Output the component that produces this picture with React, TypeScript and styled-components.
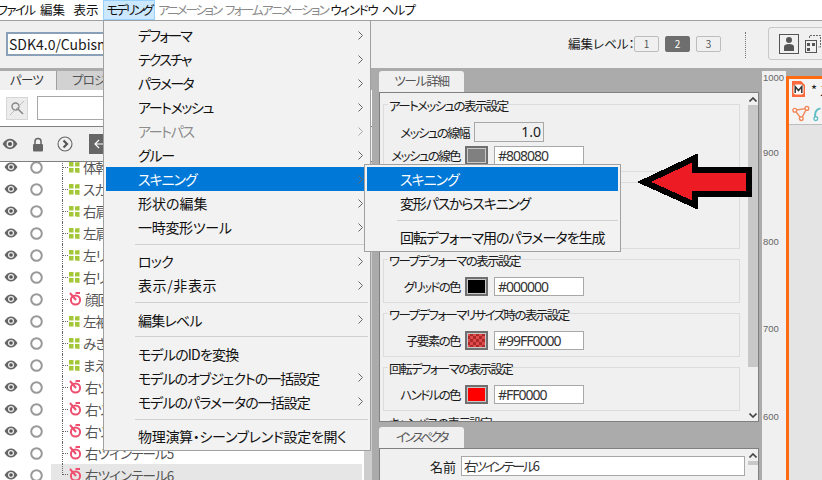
import React from 'react';
import styled, { createGlobalStyle } from 'styled-components';

const GlobalStyle = createGlobalStyle`
    html, body {
        margin: 0;
        padding: 0;
        overflow: hidden;
        background: #f0f0f0;
    }
`;

const UI_FONT = `"Noto Sans CJK JP", "Noto Sans", sans-serif`;

const Page = styled.div`
    position: relative;
    width: 822px;
    height: 480px;
    overflow: hidden;
    display: flex;
    flex-direction: column;
    font-family: ${UI_FONT};
    font-feature-settings: "palt";
    font-size: 14px;
    color: #1a1a1a;
    background: #f0f0f0;
`;

/* menu bar */
const MenuBar = styled.div`
    display: flex;
    flex: none;
    height: 20px;
    margin-left: -4px;
    background: #fff;
    border-bottom: 1px solid #a0a0a0;
`;

const MenuBarItem = styled.div<{ $width: number; $spacing: number; $active?: boolean; $disabled?: boolean }>`
    flex: none;
    width: ${(p) => p.$width}px;
    line-height: 19px;
    height: 20px;
    text-align: center;
    white-space: nowrap;
    font-size: 12.5px;
    letter-spacing: ${(p) => p.$spacing}px;
    color: ${(p) => (p.$disabled ? '#8a8a8a' : '#111')};
    background: ${(p) => (p.$active ? '#cce8ff' : 'transparent')};
    box-shadow: ${(p) => (p.$active ? 'inset 0 0 0 1px #99d1ff' : 'none')};
`;

/* tool bar */
const ToolBar = styled.div`
    display: flex;
    align-items: center;
    flex: none;
    height: 47px;
    padding-left: 6px;
    background: #f0f0f0;
`;

const ModelSelect = styled.div`
    flex: none;
    box-sizing: border-box;
    width: 240px;
    height: 24px;
    padding-left: 1px;
    line-height: 20px;
    margin-top: -2px;
    background: #fff;
    border: 2px solid #8aa0b8;
    font-size: 14px;
    white-space: nowrap;
    overflow: hidden;
`;

const LevelLabel = styled.div`
    flex: none;
    margin-left: 322px;
    width: 66px;
    font-size: 12.5px;
    white-space: nowrap;
    margin-top: -2px;
`;

const LevelButton = styled.div<{ $active?: boolean }>`
    flex: none;
    box-sizing: border-box;
    width: 25px;
    height: 16px;
    margin-right: 6px;
    margin-top: -2px;
    line-height: 14px;
    font-size: 10px;
    text-align: center;
    border: 1px solid ${(p) => (p.$active ? '#6e6e6e' : '#bdbdbd')};
    border-radius: 2px;
    color: ${(p) => (p.$active ? '#fff' : '#555')};
    background: ${(p) => (p.$active ? '#6e6e6e' : '#f0f0f0')};
`;

const DottedDivider = styled.div`
    flex: none;
    height: 26px;
    margin-left: 18px;
    margin-right: 22px;
    border-left: 1px dotted #777;
`;

const WorkspaceGroup = styled.div`
    flex: none;
    display: flex;
    align-items: center;
    gap: 5px;
    box-sizing: border-box;
    width: 70px;
    height: 33px;
    padding-left: 10px;
    margin-top: -2px;
    border: 1px solid #c8c8c8;
    border-radius: 3px;
`;

const PersonBox = styled.div`
    flex: none;
    display: flex;
    align-items: center;
    justify-content: center;
    box-sizing: border-box;
    width: 20px;
    height: 20px;
    border: 1px solid #555;
`;

/* main area */
const Main = styled.div`
    flex: 1;
    display: flex;
    min-height: 0;
    background: #ababab;
`;

const LeftPanel = styled.div`
    flex: none;
    width: 372px;
    display: flex;
    flex-direction: column;
    padding-top: 3px;
    box-sizing: border-box;
`;

const TabRow = styled.div`
    flex: none;
    display: flex;
    height: 19px;
`;

const PanelTab = styled.div<{ $active?: boolean }>`
    flex: none;
    box-sizing: border-box;
    width: ${(p) => (p.$active ? '56px' : '120px')};
    height: 19px;
    padding-left: ${(p) => (p.$active ? '10px' : '15px')};
    line-height: 18px;
    font-size: 12.5px;
    letter-spacing: -0.8px;
    color: ${(p) => (p.$active ? '#333' : '#555')};
    background: ${(p) => (p.$active ? '#f0f0f0' : '#d2d2d2')};
    border-left: ${(p) => (p.$active ? 'none' : '1px solid #a0a0a0')};
`;

const SearchRow = styled.div`
    flex: none;
    display: flex;
    align-items: center;
    gap: 9px;
    box-sizing: border-box;
    height: 37px;
    padding-left: 6px;
    background: #fff;
    border-bottom: 1px solid #808080;
`;

const SearchButton = styled.div`
    flex: none;
    display: flex;
    align-items: center;
    justify-content: center;
    box-sizing: border-box;
    width: 22px;
    height: 23px;
    background: #ececec;
    border: 1px solid #d6d6d6;
`;

const SearchInput = styled.div`
    flex: none;
    box-sizing: border-box;
    width: 320px;
    height: 24px;
    background: #fff;
    border: 1px solid #a8a8a8;
`;

const IconRow = styled.div`
    flex: none;
    display: flex;
    align-items: center;
    box-sizing: border-box;
    height: 35px;
    padding-left: 2px;
    gap: 11px;
    background: #f0f0f0;
    border-bottom: 1px solid #808080;
`;

const BackButton = styled.div`
    flex: none;
    display: flex;
    align-items: center;
    justify-content: center;
    width: 22px;
    height: 20px;
    margin-left: 5px;
    background: #666;
`;

const TreeWrap = styled.div`
    flex: 1;
    display: flex;
    min-height: 0;
    overflow: hidden;
    background: #fff;
`;

const TreeList = styled.div`
    position: relative;
    flex: 1;
    margin-top: -6px;
`;

const TreeRow = styled.div`
    display: flex;
    align-items: center;
    height: 22px;
`;

const VisibilityCell = styled.div`
    flex: none;
    display: flex;
    align-items: center;
    width: 51px;
    gap: 12px;
    padding-left: 4px;
    box-sizing: border-box;
`;

const RowBody = styled.div<{ $selected?: boolean }>`
    flex: 1;
    display: flex;
    align-items: center;
    height: 22px;
    padding-left: 11px;
    background: ${(p) => (p.$selected ? '#e6e6e6' : 'transparent')};
`;

const TreeGuide = styled.div<{ $last?: boolean }>`
    flex: none;
    width: 7px;
    height: ${(p) => (p.$last ? '11px' : '22px')};
    align-self: flex-start;
    box-sizing: border-box;
    border-left: 1px dotted #666;
    position: relative;
    &::after {
        content: '';
        position: absolute;
        left: 0;
        top: ${(p) => (p.$last ? '10px' : '11px')};
        width: 5px;
        border-top: 1px dotted #666;
    }
`;

const TreeLabel = styled.div`
    margin-left: 3px;
    white-space: nowrap;
    font-size: 13.5px;
    letter-spacing: -0.9px;
    color: #555;
    line-height: 22px;
`;

const TreeScroll = styled.div`
    flex: none;
    width: 8px;
    margin-left: 2px;
    background: #cdcdcd;
`;

/* centre column */
const CenterColumn = styled.div`
    flex: none;
    width: 390px;
    box-sizing: border-box;
    padding: 3px 3px 0 7px;
    display: flex;
    flex-direction: column;
`;

const DockTab = styled.div<{ $spacing: number }>`
    flex: none;
    box-sizing: border-box;
    width: 85px;
    height: 21px;
    line-height: 20px;
    font-size: 12.5px;
    letter-spacing: ${(p) => p.$spacing}px;
    text-align: center;
    color: #555;
    background: #f0f0f0;
    border-radius: 3px 3px 0 0;
`;

const DockPanel = styled.div<{ $height: number }>`
    flex: none;
    display: flex;
    box-sizing: border-box;
    height: ${(p) => p.$height}px;
    margin-bottom: 5px;
    overflow: hidden;
    background: #f0f0f0;
    border: 1px solid #808080;
`;

const PanelBody = styled.div`
    flex: 1;
    min-width: 0;
    display: flex;
    flex-direction: column;
    gap: 10px;
    padding: 11px 8px 0 3px;
`;

const Section = styled.div<{ $minHeight?: number }>`
    flex: none;
    box-sizing: border-box;
    min-height: ${(p) => p.$minHeight ?? 0}px;
    padding-bottom: 6px;
    border: 1px solid #dcdcdc;
`;

const SectionTitle = styled.div`
    width: fit-content;
    height: 16px;
    margin: -7px 0 8px 4px;
    padding: 0 1px;
    line-height: 16px;
    font-size: 12.5px;
    letter-spacing: -1.6px;
    white-space: nowrap;
    background: #f0f0f0;
`;

const FieldRow = styled.div`
    display: flex;
    align-items: center;
    margin-bottom: 4px;
    &:last-child {
        margin-bottom: 0;
    }
`;

const FieldLabel = styled.div<{ $width: number }>`
    flex: none;
    width: ${(p) => p.$width}px;
    margin-right: 5px;
    text-align: right;
    font-size: 12.5px;
    letter-spacing: -1.6px;
    white-space: nowrap;
`;

const NumberBox = styled.div`
    flex: none;
    box-sizing: border-box;
    width: 70px;
    height: 20px;
    padding-right: 2px;
    line-height: 18px;
    text-align: right;
    font-family: "Noto Sans", sans-serif;
    font-size: 14px;
    background: #f0f0f0;
    border: 1px solid #a8a8a8;
`;

const Swatch = styled.div<{ $color: string }>`
    flex: none;
    box-sizing: border-box;
    width: 23px;
    height: 19px;
    margin-right: 6px;
    border: 2px solid #6f6f6f;
    outline: 1px solid #c8c8c8;
    outline-offset: -3px;
    background: ${(p) => p.$color};
    background-size: 6px 6px;
`;

const ColorValue = styled.div`
    flex: none;
    box-sizing: border-box;
    width: 90px;
    height: 19px;
    padding-left: 3px;
    line-height: 17px;
    font-family: "Noto Sans", sans-serif;
    font-feature-settings: normal;
    font-size: 14px;
    letter-spacing: -1px;
    color: #333;
    background: #fff;
    border: 1px solid #a8a8a8;
`;

const ScrollTrack = styled.div`
    flex: none;
    display: flex;
    flex-direction: column;
    align-items: center;
    width: 10px;
    background: #f0f0f0;
`;

const ScrollThumb = styled.div`
    flex: 1;
    align-self: stretch;
    margin-bottom: 42px;
    background: #c8c8c8;
`;

const ScrollArrow = styled.div`
    flex: none;
    display: flex;
    align-items: center;
    justify-content: center;
    height: 12px;
`;

const InspectorBody = styled.div`
    flex: 1;
    min-width: 0;
    padding: 7px 3px 0 0;
`;

const NameRow = styled.div`
    display: flex;
    align-items: center;
`;

const NameLabel = styled.div`
    flex: none;
    width: 76px;
    margin-right: 5px;
    text-align: right;
    font-size: 13px;
`;

const NameInput = styled.div`
    flex: 1;
    box-sizing: border-box;
    height: 20px;
    padding-left: 2px;
    line-height: 18px;
    font-size: 13px;
    letter-spacing: -2.3px;
    color: #333;
    background: #fff;
    border: 1px solid #a8a8a8;
`;

/* ruler + canvas */
const Ruler = styled.div`
    flex: none;
    width: 24px;
    box-sizing: border-box;
    margin-top: 3px;
    display: flex;
    flex-direction: column;
    background: #f0f0f0;
`;

const RulerTick = styled.div<{ $gap: number }>`
    flex: none;
    height: 12px;
    margin-top: ${(p) => p.$gap}px;
    line-height: 12px;
    font-family: "Liberation Sans", sans-serif;
    font-feature-settings: normal;
    font-size: 9.5px;
    color: #666;
    padding-left: 1px;
`;

const CanvasColumn = styled.div`
    flex: 1;
    min-width: 0;
    margin-top: 8px;
    background: #e4e4e4;
    border-left: 3px solid #ff6a13;
    border-top: 3px solid #ff6a13;
`;

const CanvasHead = styled.div`
    height: 46px;
    background: #f4f4f4;
    padding: 1px 0 0 3px;
    border-bottom: 1px solid #bdbdbd;
    box-sizing: border-box;
`;

const CanvasTitle = styled.div`
    display: flex;
    align-items: center;
    gap: 6px;
    height: 18px;
    font-size: 13px;
    white-space: nowrap;
    overflow: hidden;
    svg {
        flex: none;
    }
`;

const CanvasTools = styled.div`
    display: flex;
    gap: 3px;
    margin-top: 7px;
`;

/* popup menus */
const PopupMenu = styled.div<{ $left: number; $top: number; $width: number }>`
    position: absolute;
    left: ${(p) => p.$left}px;
    top: ${(p) => p.$top}px;
    width: ${(p) => p.$width}px;
    box-sizing: border-box;
    padding: 2px;
    background: #f2f2f2;
    border: 1px solid #a0a0a0;
`;

const PopupItem = styled.div<{ $active?: boolean; $disabled?: boolean; $indent: number; $spacing: number }>`
    display: flex;
    align-items: center;
    justify-content: space-between;
    height: 24px;
    padding: 0 5px 0 ${(p) => p.$indent}px;
    white-space: nowrap;
    font-size: 14px;
    letter-spacing: ${(p) => p.$spacing}px;
    color: ${(p) => (p.$active ? '#fff' : p.$disabled ? '#8c8c8c' : '#111')};
    background: ${(p) => (p.$active ? '#0078d7' : 'transparent')};
`;

const PopupSeparator = styled.div<{ $indent: number }>`
    height: 10.3px;
    display: flex;
    align-items: center;
    padding-left: ${(p) => p.$indent}px;
    &::before {
        content: '';
        flex: 1;
        height: 1px;
        background: #d0d0d0;
    }
`;

const ArrowOverlay = styled.svg`
    position: absolute;
    left: 630px;
    top: 148px;
`;

/* drawn icons */
const Eye = () => (
    <svg width="14" height="10" viewBox="0 0 14 10">
        <path d="M0.5 5C2.5 1.8 4.6 0.5 7 0.5S11.5 1.8 13.5 5C11.5 8.2 9.4 9.5 7 9.5S2.5 8.2 0.5 5Z" fill="#666" />
        <circle cx="7" cy="5" r="3" fill="#eee" />
        <circle cx="7" cy="5" r="1.8" fill="#555" />
    </svg>
);

const Ring = () => (
    <svg width="13" height="13" viewBox="0 0 13 13">
        <circle cx="6.5" cy="6.5" r="5.3" fill="none" stroke="#999" strokeWidth="2" />
    </svg>
);

const PartIcon = () => (
    <svg width="11" height="11" viewBox="0 0 11 11">
        <path d="M0 0H4.5V4.5H0ZM6 0.5L10.5 0V4.5H6ZM0 6H4.5V10.5H0ZM6 6H10.5V11L6 10.5Z" fill="#a4c639" />
    </svg>
);

const RotateIcon = () => (
    <svg width="13" height="14" viewBox="0 0 13 14">
        <circle cx="6.5" cy="8" r="4.6" fill="none" stroke="#ef4f6f" strokeWidth="2" />
        <path d="M1 1L7 8" stroke="#ef4f6f" strokeWidth="2" />
        <path d="M6.5 1H11" stroke="#ef4f6f" strokeWidth="2" />
    </svg>
);

const Chevron = ({ color = '#666', disabled = false }: { color?: string; disabled?: boolean }) => (
    <svg width="5" height="9" viewBox="0 0 5 9">
        <path d="M0.5 0.5L4.5 4.5L0.5 8.5" fill="none" stroke={disabled ? '#a8a8a8' : color} strokeWidth="1" />
    </svg>
);

const ScrollChevron = ({ down }: { down?: boolean }) => (
    <svg width="8" height="5" viewBox="0 0 8 5">
        <path d={down ? 'M0.5 0.5L4 4L7.5 0.5' : 'M0.5 4.5L4 1L7.5 4.5'} fill="none" stroke="#444" strokeWidth="1.6" />
    </svg>
);

type MenuEntry = { label?: string; sub?: boolean; active?: boolean; disabled?: boolean; spacing?: number };

const modelingMenu: MenuEntry[] = [
    { label: 'デフォーマ', sub: true, spacing: -1.8 },
    { label: 'テクスチャ', sub: true, spacing: -1.8 },
    { label: 'パラメータ', sub: true, spacing: -1.6 },
    { label: 'アートメッシュ', sub: true, spacing: -1.4 },
    { label: 'アートパス', sub: true, disabled: true, spacing: -1.4 },
    { label: 'グルー', sub: true, spacing: -1.2 },
    { label: 'スキニング', sub: true, active: true, spacing: -1 },
    { label: '形状の編集', sub: true, spacing: 0 },
    { label: '一時変形ツール', sub: true, spacing: -0.3 },
    {},
    { label: 'ロック', sub: true, spacing: -0.8 },
    { label: '表示/非表示', sub: true, spacing: 0.6 },
    {},
    { label: '編集レベル', sub: true, spacing: -0.8 },
    {},
    { label: 'モデルのIDを変換' },
    { label: 'モデルのオブジェクトの一括設定', sub: true, spacing: -1 },
    { label: 'モデルのパラメータの一括設定', sub: true, spacing: -1 },
    {},
    { label: '物理演算・シーンブレンド設定を開く', spacing: -0.3 },
];

const skinningMenu: MenuEntry[] = [
    { label: 'スキニング', active: true, spacing: -1 },
    { label: '変形パスからスキニング', spacing: -1.2 },
    {},
    { label: '回転デフォーマ用のパラメータを生成', spacing: -1 },
];

const treeItems: { label: string; rotate?: boolean }[] = [
    { label: '体幹' },
    { label: 'スカート' },
    { label: '右肩' },
    { label: '左肩' },
    { label: '左リボン' },
    { label: '右リボン' },
    { label: '顔回り', rotate: true },
    { label: '左袖' },
    { label: 'みぎ' },
    { label: 'まえ' },
    { label: '右ツインテール2', rotate: true },
    { label: '右ツインテール3', rotate: true },
    { label: '右ツインテール4', rotate: true },
    { label: '右ツインテール5', rotate: true },
    { label: '右ツインテール6', rotate: true },
];

const menuBarItems = [
    { label: 'ファイル', width: 40, spacing: -1.6 },
    { label: '編集', width: 33, spacing: 0 },
    { label: '表示', width: 34, spacing: 0 },
    { label: 'モデリング', width: 52, spacing: -2.2, active: true },
    { label: 'アニメーション', width: 69, spacing: -2.2, disabled: true },
    { label: 'フォームアニメーション', width: 105, spacing: -1.7, disabled: true },
    { label: 'ウィンドウ', width: 50, spacing: -1.2 },
    { label: 'ヘルプ', width: 39, spacing: -0.8 },
];

const colorSections = [
    { title: 'ワープデフォーマの表示設定', label: 'グリッドの色', swatch: '#000', value: '#000000' },
    {
        title: 'ワープデフォーマリサイズ時の表示設定',
        label: '子要素の色',
        swatch: 'repeating-conic-gradient(#a92a2a 0 25%, #e04a4a 0 50%)',
        value: '#99FF0000',
    },
    { title: '回転デフォーマの表示設定', label: 'ハンドルの色', swatch: '#ff0000', value: '#FF0000' },
];

const renderMenu = (entries: MenuEntry[], indent: number) =>
    entries.map((entry, i) =>
        entry.label ? (
            <PopupItem
                key={i}
                $indent={indent}
                $spacing={entry.spacing ?? -0.8}
                $active={entry.active}
                $disabled={entry.disabled}
            >
                {entry.label}
                {entry.sub && <Chevron disabled={entry.disabled} />}
            </PopupItem>
        ) : (
            <PopupSeparator key={i} $indent={indent - 3} />
        )
    );

export default function App() {
    return (
        <Page>
            <GlobalStyle />
            <MenuBar>
                {menuBarItems.map((item) => (
                    <MenuBarItem
                        key={item.label}
                        $width={item.width}
                        $spacing={item.spacing}
                        $active={item.active}
                        $disabled={item.disabled}
                    >
                        {item.label}
                    </MenuBarItem>
                ))}
            </MenuBar>

            <ToolBar>
                <ModelSelect>SDK4.0/Cubism4</ModelSelect>
                <LevelLabel>編集レベル：</LevelLabel>
                <LevelButton>1</LevelButton>
                <LevelButton $active>2</LevelButton>
                <LevelButton>3</LevelButton>
                <DottedDivider />
                <WorkspaceGroup>
                    <PersonBox>
                        <svg width="12" height="16" viewBox="0 0 12 16">
                            <circle cx="6" cy="4" r="3" fill="#555" />
                            <path d="M1 15V11C1 8.8 3 8 6 8S11 8.8 11 11V15Z" fill="#555" />
                        </svg>
                    </PersonBox>
                    <svg width="18" height="20" viewBox="0 0 18 20">
                        <path d="M5.5 4V1.5H16.5V13H14" fill="none" stroke="#666" strokeDasharray="2 1" />
                        <rect x="1.5" y="6.5" width="11" height="12" fill="none" stroke="#555" />
                        <rect x="3" y="9" width="3" height="3" fill="#555" />
                        <rect x="8" y="9" width="3" height="3" fill="#555" />
                        <rect x="3" y="14" width="3" height="3" fill="#555" />
                    </svg>
                </WorkspaceGroup>
            </ToolBar>

            <Main>
                <LeftPanel>
                    <TabRow>
                        <PanelTab $active>パーツ</PanelTab>
                        <PanelTab>プロジェクト</PanelTab>
                    </TabRow>
                    <SearchRow>
                        <SearchButton>
                            <svg width="16" height="16" viewBox="0 0 16 16">
                                <circle cx="6.5" cy="6.5" r="3.5" fill="none" stroke="#888" strokeWidth="1.4" />
                                <path d="M9 9L14 14" stroke="#888" strokeWidth="1.6" />
                                <path d="M1 15L15 1" stroke="#bbb" />
                            </svg>
                        </SearchButton>
                        <SearchInput />
                    </SearchRow>
                    <IconRow>
                        <svg width="16" height="12" viewBox="0 0 14 10">
                            <path d="M0.5 5C2.5 1.8 4.6 0.5 7 0.5S11.5 1.8 13.5 5C11.5 8.2 9.4 9.5 7 9.5S2.5 8.2 0.5 5Z" fill="#666" />
                            <circle cx="7" cy="5" r="3" fill="#eee" />
                            <circle cx="7" cy="5" r="1.8" fill="#555" />
                        </svg>
                        <svg width="12" height="15" viewBox="0 0 12 15" style={{ marginLeft: 3 }}>
                            <path d="M3 7V4.5C3 2.5 4.3 1.5 6 1.5S9 2.5 9 4.5V7" fill="none" stroke="#666" strokeWidth="1.5" />
                            <rect x="1" y="7" width="10" height="7.5" rx="1" fill="#666" />
                        </svg>
                        <svg width="16" height="16" viewBox="0 0 16 16" style={{ marginLeft: 2 }}>
                            <circle cx="8" cy="8" r="7" fill="none" stroke="#666" strokeWidth="1.1" />
                            <path d="M6.5 4.5L10 8L6.5 11.5" fill="none" stroke="#555" strokeWidth="2.2" />
                        </svg>
                        <BackButton>
                            <svg width="12" height="10" viewBox="0 0 12 10">
                                <path d="M12 5H1.5M5 1L1 5L5 9" fill="none" stroke="#fff" strokeWidth="1.2" />
                            </svg>
                        </BackButton>
                    </IconRow>
                    <TreeWrap>
                        <TreeList>
                            {treeItems.map((item, i) => (
                                <TreeRow key={item.label}>
                                    <VisibilityCell>
                                        <Eye />
                                        <Ring />
                                    </VisibilityCell>
                                    <RowBody $selected={i === treeItems.length - 1}>
                                        <TreeGuide $last={i === treeItems.length - 1} />
                                        {item.rotate ? <RotateIcon /> : <PartIcon />}
                                        <TreeLabel>{item.label}</TreeLabel>
                                    </RowBody>
                                </TreeRow>
                            ))}
                        </TreeList>
                        <TreeScroll />
                    </TreeWrap>
                </LeftPanel>

                <CenterColumn>
                    <DockTab $spacing={-1.2}>ツール詳細</DockTab>
                    <DockPanel $height={330}>
                        <PanelBody>
                            <Section>
                                <SectionTitle>アートメッシュの表示設定</SectionTitle>
                                <FieldRow>
                                    <FieldLabel $width={85}>メッシュの線幅</FieldLabel>
                                    <NumberBox>1.0</NumberBox>
                                </FieldRow>
                                <FieldRow>
                                    <FieldLabel $width={76}>メッシュの線色</FieldLabel>
                                    <Swatch $color="#808080" />
                                    <ColorValue>#808080</ColorValue>
                                </FieldRow>
                            </Section>
                            <Section $minHeight={67} />
                            {colorSections.map((section) => (
                                <Section key={section.title}>
                                    <SectionTitle>{section.title}</SectionTitle>
                                    <FieldRow>
                                        <FieldLabel $width={76}>{section.label}</FieldLabel>
                                        <Swatch $color={section.swatch} />
                                        <ColorValue>{section.value}</ColorValue>
                                    </FieldRow>
                                </Section>
                            ))}
                            <Section>
                                <SectionTitle>キャンバスの表示設定</SectionTitle>
                            </Section>
                        </PanelBody>
                        <ScrollTrack>
                            <ScrollArrow>
                                <ScrollChevron />
                            </ScrollArrow>
                            <ScrollThumb />
                            <ScrollArrow>
                                <ScrollChevron down />
                            </ScrollArrow>
                        </ScrollTrack>
                    </DockPanel>
                    <DockTab $spacing={-2.6}>インスペクタ</DockTab>
                    <DockPanel $height={60}>
                        <InspectorBody>
                            <NameRow>
                                <NameLabel>名前</NameLabel>
                                <NameInput>右ツインテール6</NameInput>
                            </NameRow>
                        </InspectorBody>
                        <ScrollTrack>
                            <ScrollArrow>
                                <ScrollChevron />
                            </ScrollArrow>
                            <ScrollThumb />
                        </ScrollTrack>
                    </DockPanel>
                </CenterColumn>

                <Ruler>
                    <RulerTick $gap={1}>1000</RulerTick>
                    <RulerTick $gap={63}>900</RulerTick>
                    <RulerTick $gap={77}>800</RulerTick>
                    <RulerTick $gap={75}>700</RulerTick>
                    <RulerTick $gap={76}>600</RulerTick>
                </Ruler>

                <CanvasColumn>
                    <CanvasHead>
                        <CanvasTitle>
                            <svg width="13" height="16" viewBox="0 0 13 16">
                                <path d="M0 0H9L13 4V16H0Z" fill="#ff6a3c" />
                                <rect x="1.5" y="3.5" width="10" height="10" rx="2" fill="#fff" />
                                <path d="M3.2 12V5.5L6.5 9.5L9.8 5.5V12" fill="none" stroke="#333" strokeWidth="1.5" />
                            </svg>
                            <span>* ス</span>
                        </CanvasTitle>
                        <CanvasTools>
                            <svg width="19" height="17" viewBox="0 0 19 17">
                                <path d="M3 5L10 14L16 3Z" fill="none" stroke="#f08a5c" strokeWidth="1.5" />
                                <circle cx="3" cy="5" r="2" fill="#fff" stroke="#f08a5c" strokeWidth="1.5" />
                                <circle cx="16" cy="3" r="2" fill="#fff" stroke="#f08a5c" strokeWidth="1.5" />
                                <circle cx="10" cy="14" r="2" fill="#fff" stroke="#f08a5c" strokeWidth="1.5" />
                            </svg>
                            <svg width="10" height="17" viewBox="0 0 10 17">
                                <path d="M8 3C3 4 1 8 3 14" fill="none" stroke="#5bbcc4" strokeWidth="2" />
                                <circle cx="3" cy="14" r="2" fill="#fff" stroke="#5bbcc4" strokeWidth="1.4" />
                            </svg>
                        </CanvasTools>
                    </CanvasHead>
                </CanvasColumn>
            </Main>

            <PopupMenu $left={103} $top={20} $width={268}>
                {renderMenu(modelingMenu, 32)}
            </PopupMenu>
            <PopupMenu $left={364} $top={164} $width={257}>
                {renderMenu(skinningMenu, 33)}
            </PopupMenu>

            <ArrowOverlay width="130" height="70" viewBox="630 148 130 70" shapeRendering="crispEdges">
                <path d="M644 182L695 158V170H748.5V193.5H695V205Z" fill="#ed1c24" stroke="#000" strokeWidth="6" />
            </ArrowOverlay>
        </Page>
    );
}
